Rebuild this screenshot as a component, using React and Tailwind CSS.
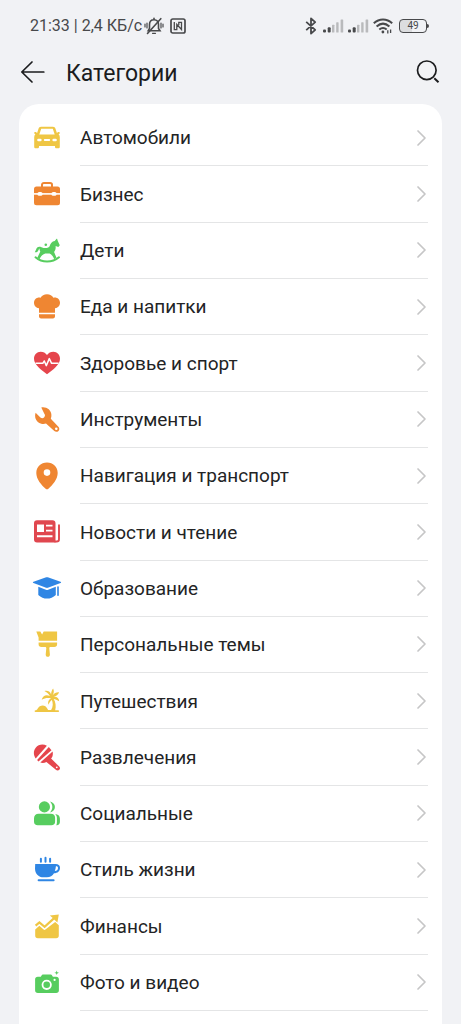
import { clsx } from "clsx";

const categories = [
  { id: "auto", title: "Автомобили", icon: CarIcon, color: "text-[#efc644]" },
  { id: "business", title: "Бизнес", icon: BriefcaseIcon, color: "text-[#ef8632]" },
  { id: "kids", title: "Дети", icon: HorseIcon, color: "text-[#57cd5f]" },
  { id: "food", title: "Еда и напитки", icon: ChefHatIcon, color: "text-[#ef8632]" },
  { id: "health", title: "Здоровье и спорт", icon: HeartIcon, color: "text-[#e5454c]" },
  { id: "tools", title: "Инструменты", icon: WrenchIcon, color: "text-[#ef8632]" },
  { id: "navigation", title: "Навигация и транспорт", icon: PinIcon, color: "text-[#ef8632]" },
  { id: "news", title: "Новости и чтение", icon: NewsIcon, color: "text-[#e0474f]" },
  { id: "education", title: "Образование", icon: HatIcon, color: "text-[#2f86e4]" },
  { id: "themes", title: "Персональные темы", icon: BrushIcon, color: "text-[#efc644]" },
  { id: "travel", title: "Путешествия", icon: PalmIcon, color: "text-[#efc644]" },
  { id: "fun", title: "Развлечения", icon: MicIcon, color: "text-[#e5454c]" },
  { id: "social", title: "Социальные", icon: PeopleIcon, color: "text-[#57cd5f]" },
  { id: "lifestyle", title: "Стиль жизни", icon: CupIcon, color: "text-[#2f86e4]" },
  { id: "finance", title: "Финансы", icon: ChartIcon, color: "text-[#efc644]" },
  { id: "photo", title: "Фото и видео", icon: CameraIcon, color: "text-[#57cd5f]" },
];

function CategorySvg({ children }) {
  return (
    <svg viewBox="0 0 26 26" className="size-[26px] overflow-visible" fill="currentColor" aria-hidden="true">
      {children}
    </svg>
  );
}

function CarIcon() {
  return (
    <CategorySvg>
      <path
        fillRule="evenodd"
        d="M7 1.7h12c1.200 0 2.100.7 2.400 1.800l1.500 4.500 1.200-.9c.8-.4 1.700 0 1.700.8 0 .6-.4 1-1.200 1.300.8.8 1.200 1.800 1.200 3v9.500c0 1-.6 1.600-1.600 1.600h-1.600c-1 0-1.600-.6-1.600-1.600V21H5v.7c0 1-.6 1.600-1.600 1.600H1.800c-1 0-1.600-.6-1.600-1.600v-9.500c0-1.200.4-2.200 1.200-3C.6 8.900.2 8.500.2 7.900c0-.8.9-1.200 1.700-.8l1.200.9 1.500-4.500C4.900 2.400 5.800 1.700 7 1.700Zm.2 2L5.300 9.500h15.400l-1.900-5.800H7.200Z"
      />
      <g fill="white">
        <rect x="3.200" y="13.800" width="4.400" height="2.400" rx="1.200" />
        <rect x="18.400" y="13.800" width="4.400" height="2.400" rx="1.200" />
        <rect x="9.800" y="14" width="6.400" height="2" rx="1" />
      </g>
    </CategorySvg>
  );
}

function BriefcaseIcon() {
  return (
    <CategorySvg>
      <path d="M8 6.500V3.800C8 2.700 8.800 2 9.900 2h6.200c1.100 0 1.900.7 1.900 1.800v2.700" fill="none" stroke="currentColor" strokeWidth="2" />
      <rect y="5.500" width="26" height="18.800" rx="2.500" />
      <g fill="white">
        <rect y="12.100" width="26" height="1.600" />
        <rect x="3.500" y="11" width="5" height="3.800" rx="1.600" />
        <rect x="17.500" y="11" width="5" height="3.800" rx="1.600" />
      </g>
    </CategorySvg>
  );
}

function HorseIcon() {
  return (
    <CategorySvg>
      <path d="M1.500 19.300C8 25 18 25 25 19.300" fill="none" stroke="currentColor" strokeWidth="2" strokeLinecap="round" />
      <path d="M22.600.8 20.700 3c-2.700.5-4.300 2.300-5 5-1 2.200-4.600 2.800-8.200 1.200C4.800 8 2.600 9 2.100 11.600L.8 14.300c1.700.3 3.100-.3 3.700-2.300.3-.9.700-1.300 1.200-1.400-.4 1.300 0 2.200.6 3l-3 6.200 2.200 1.500c1.300-3.100 3.100-5 5.700-5.700h4.400c2 .8 3.600 2.800 4.600 5.700l2.300-1.500-2.400-5.700c1.500-2 1.700-3.900 1.500-6l2.700.9 1.500-1.800-2-4.200-.7-2.200Z" />
      <circle cx="11.800" cy="6.800" r="1.300" />
    </CategorySvg>
  );
}

function ChefHatIcon() {
  return (
    <CategorySvg>
      <path d="M5 18.700v-4.500C2 14 0 11.700 0 8.800 0 5.300 3 2.900 6.600 3.700 7.800 1.700 10.100.3 13 .3s5.200 1.400 6.400 3.400c3.600-.8 6.600 1.600 6.600 5.100 0 2.900-2 5.200-5 5.400v4.500H5Z" />
      <path d="M5 20.200h16v2.100c0 1.300-.8 2.100-2.100 2.100H7.100C5.800 24.400 5 23.600 5 22.300v-2.100Z" />
    </CategorySvg>
  );
}

function HeartIcon() {
  return (
    <CategorySvg>
      <path d="M13 24.200C7 20 0 14.500 0 8.700 0 4.700 2.900 1.800 6.600 1.800c2.700 0 5 1.200 6.400 3.300 1.400-2.100 3.700-3.300 6.400-3.300 3.700 0 6.600 2.900 6.600 6.900 0 5.800-7 11.300-13 15.500Z" />
      <path d="M1.500 13.300h7.300l1.500-2.300 2 4.600 3-7 2.300 4.700h7" fill="none" stroke="white" strokeWidth="1.500" strokeLinejoin="round" />
    </CategorySvg>
  );
}

function WrenchIcon() {
  return (
    <CategorySvg>
      <path
        fillRule="evenodd"
        d="M7.300.5c5.200-.9 9.800 2.400 10.100 7.300.1 1.500-.1 2.800-.6 3.900l7.600 8c1.200 1.300 1.200 3 .1 4.200-1.200 1.200-2.900 1.200-4.200.1l-8.300-7.400c-4.700 1.500-9.800-1.500-10.800-6.400-.3-1.600-.1-3.100.4-4.500l4.800 4.700c1.300 1.100 2.700 1 3.800-.1 1-1.100 1.100-2.500 0-3.700L7.300.5Zm15 19.900a1.300 1.300 0 1 0 0 2.600 1.300 1.300 0 0 0 0-2.600Z"
      />
    </CategorySvg>
  );
}

function PinIcon() {
  return (
    <CategorySvg>
      <path
        fillRule="evenodd"
        d="M13-.5C6.900-.5 2.300 4 2.300 9.900c0 6.400 5.300 12.100 9.300 15.800.9.800 1.900.8 2.800 0 4-3.700 9.300-9.400 9.300-15.800C23.700 4 19.100-.5 13-.5Zm0 6.800a3.300 3.300 0 1 1 0 6.600 3.300 3.300 0 0 1 0-6.600Z"
      />
    </CategorySvg>
  );
}

function NewsIcon() {
  return (
    <CategorySvg>
      <path
        fillRule="evenodd"
        d="M3 1.200h15.500c1.900 0 3 1.100 3 3v19.300H3c-1.900 0-3-1.100-3-3V4.200c0-1.900 1.100-3 3-3Zm0 4.300v7.600h7V5.500H3Zm9 .2v1.900h6.500V5.700H12Zm0 5v1.900h6.500v-1.900H12Zm-9 5.600v2h15.500v-2H3Z"
      />
      <path d="M21 22.500h1.700c1.500 0 2.300-.8 2.300-2.300V6.300" fill="none" stroke="currentColor" strokeWidth="1.900" strokeLinecap="round" />
      <path d="M22.700 5v15.500" fill="none" stroke="white" strokeWidth="1.200" />
    </CategorySvg>
  );
}

function HatIcon() {
  return (
    <CategorySvg>
      <path d="m12.200 1.300-12.700 4.500c-.8.300-.8 1 0 1.300l12.600 4.700c.6.200 1.200.2 1.800 0l12.600-4.700c.8-.3.800-1 0-1.300L13.800 1.300c-.6-.2-1-.2-1.600 0Z" />
      <path d="m4.300 10.800 7.600 2.900c.8.300 1.500.3 2.300 0l7.600-2.900v8.100c-5 4.800-12.500 4.800-17.500 0v-8.100Z" />
      <rect x="23.200" y="10.200" width="1.600" height="9.800" rx=".8" />
    </CategorySvg>
  );
}

function BrushIcon() {
  return (
    <CategorySvg>
      <path d="M2.300-.5h4l1.800 3 1.600-3h13.400v9.300H4.600V5.600L2.300-.5Z" />
      <path d="M4.600 10.600h18.500v1.600c0 1.800-1 2.800-2.800 2.800h-3.700c-.8 0-1.300.5-1.300 1.300l.6 6.200c0 1.400-.8 2.300-2.100 2.300s-2.100-.9-2.100-2.300l.6-6.200c0-.8-.5-1.300-1.300-1.300H7.400c-1.800 0-2.800-1-2.800-2.800v-1.600Z" />
    </CategorySvg>
  );
}

function PalmIcon() {
  return (
    <CategorySvg>
      <path d="M1.600 22.300c1.900 0 1.900-2.500 4.300-4 3-1.700 6.100-.4 7.500 2.500l.7 1.300h3c2.100-3.300 2.200-7 .4-11l1.900-.5c2.400 3.800 2.800 7.700 1.800 11.600h2.500c.9 0 1.400.3 1.400.9s-.5 1-1.400 1H2c-.9 0-1.400-.4-1.400-1 0-.5.4-.8 1-.8Z" />
      <path d="M17 10.400c-3.300-.7-6.300-.3-9.300 1.300.8-3.700 4.300-5.800 8.200-3.700C14.300 5.600 12.800 4.200 10.400 3c3.400-.8 6.200.7 6.700 3.600.1-2.600.7-4.500 2-6.100 1.200 2.500.9 4.600-.6 7 1.900-2.500 3.800-3.500 6.600-3.300-1 2.600-2.800 4.100-5.600 4.600 3.400-.4 5.700 1.500 5.700 4.500-1.900-1.400-3.900-2.200-6-2.400-2.100 1-3.600 3-4.700 5.800-1-3 0-5.200 2.500-6.300Z" />
    </CategorySvg>
  );
}

function MicIcon() {
  return (
    <CategorySvg>
      <path d="M12.900.7C8.900-1.300 4.300-.5 1.700 2.700c-2.500 3.100-2.400 7.300 0 10.700L12.900.7Z" />
      <path d="M14.800 2 3.100 15l1.400 1.500L17.500 5.200 14.800 2Z" />
      <path d="M18.600 6.500c.6 2.700.1 5.200-1.500 7l7.900 7.800c1.300 1.200 1.300 2.500.3 3.500s-2.500.8-3.700-.3L12.400 17c-2 1-4 1.200-6.100.6L18.600 6.500Z" />
      <circle cx="22.800" cy="22.300" r=".9" fill="white" />
    </CategorySvg>
  );
}

function PeopleIcon() {
  return (
    <CategorySvg>
      <circle cx="10.400" cy="5.900" r="5.600" />
      <path d="M15.900.4c3 .6 5 2.800 5 5.500s-2 5-5 5.500c3.300-3.500 3.300-7.500 0-11Z" />
      <path d="M4.600 12.800h12.200c2.600 0 4.300 1.500 4.300 4v3.700c0 2.500-1.300 3.800-3.800 3.800H3.800C1.300 24.300 0 23 0 20.500v-3.100c0-2.800 1.800-4.600 4.600-4.600Z" />
      <path d="M21 12.900c3 .2 4.900 1.900 4.900 4.600V21c0 2-1.200 3.200-3.200 3.300h-.5c.5-.9.700-2 .7-3.400v-4c0-1.700-.6-3-1.900-4Z" />
    </CategorySvg>
  );
}

function CupIcon() {
  return (
    <CategorySvg>
      <path
        fillRule="evenodd"
        d="M1.200 7h20.500c2.600 0 4.300 1.300 4.300 3.700 0 3.300-2.300 5.500-6 5.500-1.500 2.600-3.900 4.100-7.100 4.100h-3.200C4.200 20.300 1 16.600 1 11.500L1.200 7Zm20.700 2.300c-.1 1.800-.5 3.200-1.100 4.600 2-.1 3.200-1.200 3.200-3 0-1.100-.7-1.700-2.100-1.600Z"
      />
      <rect x="3.600" y="22.300" width="17" height="2" rx="1" />
      <path d="M6.900 1.800v3M11.500.8v4M16.100 1.800v3" fill="none" stroke="currentColor" strokeWidth="2" strokeLinecap="round" />
    </CategorySvg>
  );
}

function ChartIcon() {
  return (
    <CategorySvg>
      <path d="m1.600 11.600 3.800-3.200 5.200 4.400L21.800 2.600" fill="none" stroke="currentColor" strokeWidth="2.200" />
      <path d="M15.800 1.600 24.800.6l-1.400 8-2.700-2.700-2.500-2.500-2.400-1.800Z" />
      <path d="m1.200 15.400 4.200-3.600 4.200 3.700c.6.500 1.200.5 1.800 0L21.200 8l3.600 3.200v10.400c0 1.800-.9 2.700-2.700 2.700H3.900c-1.800 0-2.700-.9-2.700-2.700v-6.200Z" />
    </CategorySvg>
  );
}

function CameraIcon() {
  return (
    <CategorySvg>
      <path
        fillRule="evenodd"
        d="M9.200 4.500h7.300c.8 0 1.200.3 1.600 1l.8 1.300h3.300c1.700 0 2.700 1 2.700 2.700v10.800c0 1.800-1 2.800-2.800 2.800H3.900c-1.800 0-2.800-1-2.800-2.800V9.500c0-1.700 1-2.700 2.700-2.700h3L7.600 5.500c.4-.7.800-1 1.600-1Zm3.500 5.200a5.100 5.100 0 1 0 0 10.200 5.100 5.100 0 0 0 0-10.200Zm0 1.800a3.300 3.300 0 1 1 0 6.600 3.300 3.300 0 0 1 0-6.600Z"
      />
      <circle cx="20.600" cy="9.900" r="1.100" fill="white" />
      <path d="m22.700.5.600 1.700 1.700.6-1.700.6-.6 1.700-.6-1.700-1.700-.6 1.700-.6.600-1.700Z" />
    </CategorySvg>
  );
}

function SignalBars() {
  return (
    <svg viewBox="0 0 21 14" className="h-3.5 w-[21px]" fill="currentColor" aria-hidden="true">
      <rect x="0" y="10.500" width="3" height="3" rx="1" />
      <rect x="4.700" y="8.300" width="3" height="5.200" rx="1" />
      <g fill="#b9babc">
        <rect x="9" y="5.700" width="2.400" height="7.800" rx=".6" />
        <rect x="13.200" y="3.200" width="2.400" height="10.300" rx=".6" />
        <rect x="17.600" y=".5" width="2.600" height="13" rx=".6" />
      </g>
    </svg>
  );
}

function StatusBar() {
  return (
    <div className="flex h-[50px] shrink-0 items-center justify-between pt-0.5 pr-8 pl-[30px] text-[#48494b]">
      <div className="flex items-center">
        <span className="text-base whitespace-nowrap">21:33 | 2,4 КБ/с</span>
        <svg viewBox="0 0 20 18" className="ml-0.5 h-[18px] w-5" fill="none" stroke="currentColor" strokeWidth="1.600" strokeLinecap="round" aria-hidden="true">
          <path d="M4.200 13.800h11.800l-1.500-2.300V7.500c0-2.800-1.600-4.800-4.500-4.800S5.500 4.700 5.500 7.500v4l-1.300 2.300ZM10 2.500V1.300" />
          <path d="M8.500 16.300h3M1 7v3M3 6v5M17 6v5M19 7v3" strokeWidth="1.200" />
          <path d="M3.500 16.500 16.800 1.700" />
        </svg>
        <svg viewBox="0 0 16 16" className="ml-1.5 size-4" fill="none" stroke="currentColor" strokeWidth="1.700" aria-hidden="true">
          <rect x="1" y="1" width="14" height="14" rx="1.800" />
          <path d="M4.300 4v7.700h2.500V6.400l4.700 5.100V4.300H8.800v2.900" strokeWidth="1.300" />
        </svg>
      </div>
      <div className="flex items-center">
        <svg viewBox="0 0 12 18" className="h-[18px] w-3" fill="none" stroke="currentColor" strokeWidth="1.800" strokeLinejoin="round" aria-hidden="true">
          <path d="m1.200 4.800 9 8L6 16.600V1.400l4.200 3.800-9 8" />
        </svg>
        <span className="ml-1.5 flex gap-1">
          <SignalBars />
          <SignalBars />
        </span>
        <svg viewBox="0 0 20 16" className="ml-1 h-4 w-5" fill="none" stroke="currentColor" strokeWidth="2" aria-hidden="true">
          <path d="M.8 5.300c5.400-5.100 13-5.100 18.400 0M3.600 8.500c4-3.600 8.800-3.600 12.800 0M6.300 11.500c2.500-2.100 4.900-2.100 7.400 0" />
          <circle cx="9.900" cy="14" r="1.400" fill="currentColor" stroke="none" />
          <path d="M14.800 15.500v-3.300M17.600 11.500v3.500" strokeWidth="1.300" />
        </svg>
        <span className="ml-1.5 flex items-center">
          <span className="flex h-3.5 w-7 items-center justify-center rounded-[4px] border border-current bg-linear-to-r from-[#dcdddf] from-45% to-transparent to-45% text-[10px] leading-none">
            49
          </span>
          <span className="h-1 w-0.5 rounded-r-sm bg-current" />
        </span>
      </div>
    </div>
  );
}

function Header() {
  return (
    <header className="mb-2.5 flex h-11 shrink-0 items-center pr-[21px] pl-5 text-[#1b1c1e]">
      <button type="button" aria-label="Назад" className="cursor-pointer">
        <svg viewBox="0 0 26 24" className="h-6 w-[26px]" fill="none" stroke="currentColor" strokeWidth="1.700" strokeLinecap="round" strokeLinejoin="round" aria-hidden="true">
          <path d="M12 2 1.800 12 12 22M2 12h21.800" />
        </svg>
      </button>
      <h1 className="ml-5 flex-1 pt-1 text-[23px]">Категории</h1>
      <button type="button" aria-label="Поиск" className="cursor-pointer">
        <svg viewBox="0 0 24 24" className="size-6" fill="none" stroke="currentColor" strokeWidth="1.700" aria-hidden="true">
          <circle cx="10.800" cy="10.300" r="9.300" />
          <path d="m18.300 18.300 4.200 4" strokeWidth="2" />
        </svg>
      </button>
    </header>
  );
}

function CategoryRow({ category }) {
  const Icon = category.icon;

  return (
    <li className="flex min-h-14">
      <a href={`#${category.id}`} className="flex flex-1 items-stretch gap-5">
        <span className={clsx("flex items-center", category.color)}>
          <Icon />
        </span>
        <span className="flex flex-1 items-center justify-between border-b border-[#e4e5e6]">
          <span className="pt-0.5 text-[19px] text-[#232425]">{category.title}</span>
          <svg viewBox="0 0 12 18" className="h-[18px] w-3" fill="none" stroke="#c6c6c7" strokeWidth="1.700" strokeLinecap="round" strokeLinejoin="round" aria-hidden="true">
            <path d="m2 2 7 7-7 7" />
          </svg>
        </span>
      </a>
    </li>
  );
}

export default function App() {
  return (
    <div className="flex min-h-screen flex-col bg-[#f1f2f5] font-[Roboto,sans-serif]">
      <StatusBar />
      <Header />
      <main className="mx-[19px] flex flex-1 flex-col rounded-t-[20px] bg-white pt-1.5 pr-3.5 pb-[13px] pl-[15px]">
        <ul className="grid flex-1 auto-rows-fr">
          {categories.map((category) => (
            <CategoryRow key={category.id} category={category} />
          ))}
        </ul>
      </main>
    </div>
  );
}
